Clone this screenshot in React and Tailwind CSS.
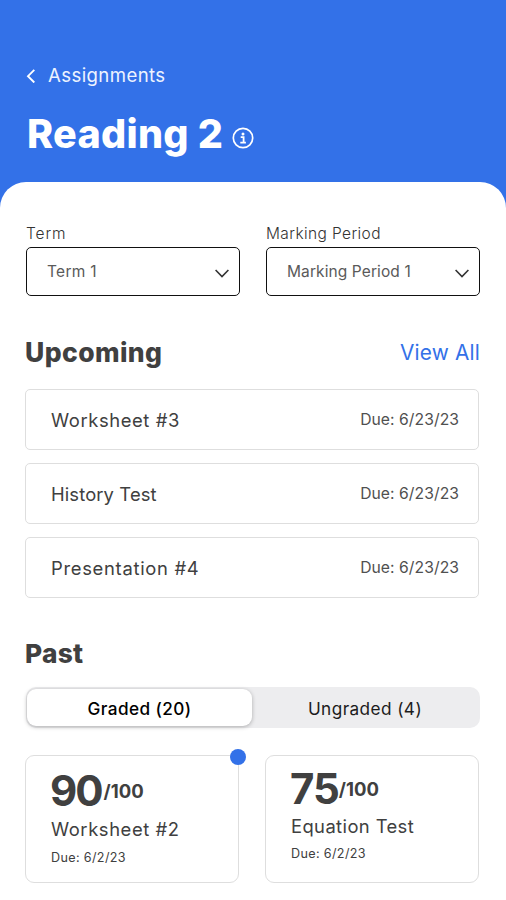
const upcoming = [
  { name: 'Worksheet #3', due: '6/23/23', tracking: 'tracking-[0.6px]' },
  { name: 'History Test', due: '6/23/23', tracking: 'tracking-[0.12px]' },
  { name: 'Presentation #4', due: '6/23/23', tracking: 'tracking-[0.7px]' },
];

function BackIcon() {
  return (
    <svg className="h-[14px] w-[10px]" viewBox="0 0 10 14" fill="none" stroke="currentColor" strokeWidth="1.9">
      <path d="M8.3 0.8 2 7.2 8.3 13.5" />
    </svg>
  );
}

function InfoIcon() {
  return (
    <svg className="h-[22px] w-[22px]" viewBox="0 0 22 22" fill="none" stroke="currentColor">
      <circle cx="11" cy="11" r="9.7" strokeWidth="1.7" />
      <circle cx="11" cy="6.9" r="1.5" fill="currentColor" stroke="none" />
      <path d="M8.7 10.1h2.9v5.4M8.3 15.6h5.6" strokeWidth="1.8" />
    </svg>
  );
}

function SelectField({ label, value, labelTracking, valueTracking }) {
  return (
    <div>
      <div className={`h-[22px] pt-px text-[15.5px] leading-[22px] font-light text-[#333] ${labelTracking}`}>
        {label}
      </div>
      <button className="mt-[3px] flex h-[49px] w-full items-center justify-between rounded-[5px] border border-[#111] pr-[10px] pl-5">
        <span className={`text-[15.5px] leading-6 text-[#5a5a5a] ${valueTracking}`}>{value}</span>
        <svg className="mt-[3px] h-[9px] w-[14px]" viewBox="0 0 14 9" fill="none" stroke="#333" strokeWidth="1.6">
          <path d="M0.6 1 7 7.6 13.4 1" />
        </svg>
      </button>
    </div>
  );
}

function UpcomingRow({ name, due, tracking }) {
  return (
    <div className="flex h-[61px] items-center justify-between rounded-[5px] border border-[#dedede] pr-[19px] pl-[25px]">
      <span className={`text-[18.4px] leading-6 text-[#404040] ${tracking}`}>{name}</span>
      <span className="text-[15.7px] leading-6 tracking-[0.05px] text-[#505050]">Due: {due}</span>
    </div>
  );
}

export default function App() {
  return (
    <div className="h-[900px] w-full overflow-hidden bg-[#3371e8] font-['Inter','Noto_Sans',sans-serif]">
      <header className="h-[182px] px-[26px] pt-[63px] text-white">
        <div className="flex h-6 items-center">
          <span className="pt-[2px]">
            <BackIcon />
          </span>
          <span className="ml-3 text-[18.6px] leading-6 tracking-[0.4px] text-[#edf3ff]">Assignments</span>
        </div>
        <div className="mt-[23px] flex h-12 items-center">
          <h1 className="ml-px text-[39.5px] leading-[48px] font-extrabold tracking-[0.3px]">Reading 2</h1>
          <span className="mt-[7px] ml-[9px]">
            <InfoIcon />
          </span>
        </div>
      </header>

      <main className="h-[718px] rounded-t-[26px] bg-white pt-10 pr-[26px] pl-[25px]">
        <div className="ml-px grid grid-cols-2 gap-[26px]">
          <SelectField label="Term" value="Term 1" labelTracking="tracking-[0.9px]" valueTracking="tracking-[0.3px]" />
          <SelectField
            label="Marking Period"
            value="Marking Period 1"
            labelTracking="tracking-[0.4px]"
            valueTracking="tracking-[0.1px]"
          />
        </div>

        {/* Upcoming */}
        <div className="mt-10 flex items-center justify-between">
          <h2 className="text-[26.5px] leading-8 font-extrabold tracking-[0.4px] text-[#404040]">Upcoming</h2>
          <a className="mt-[2px] text-[20.8px] leading-[30px] tracking-[0.2px] text-[#3371e8]">View All</a>
        </div>
        <div className="mt-[21px] mr-px flex flex-col gap-[13px]">
          {upcoming.map((item) => (
            <UpcomingRow key={item.name} {...item} />
          ))}
        </div>

        {/* Past */}
        <h2 className="mt-10 text-[26.3px] leading-8 font-extrabold tracking-[0.3px] text-[#404040]">Past</h2>
        <div className="mt-[17px] ml-px flex h-[41px] rounded-[10px] bg-[#ededef] p-[2px] pl-px text-[17.2px]">
          <button className="h-[37px] w-[225px] rounded-[9px] bg-white pt-[2px] font-medium tracking-[0.4px] text-black shadow-[0_1px_4px_rgba(0,0,0,0.28)]">
            Graded (20)
          </button>
          <button className="flex-1 pt-[2px] tracking-[0.42px] text-[#1c1c1c]">Ungraded (4)</button>
        </div>

        <div className="mt-[27px] mr-px flex gap-[26px]">
          <div className="relative h-32 flex-1 rounded-[9px] border border-[#dedede] pt-[14px] pl-[25px] text-[#404040]">
            <span className="absolute -top-[7px] -right-[8px] h-4 w-4 rounded-full bg-[#3371e8]" />
            <div className="flex h-[42px] items-center font-bold">
              <span className="-ml-px text-[42px] leading-[42px] tracking-[-2px]">90</span>
              <span className="ml-[2px] text-[18.5px] leading-6">/100</span>
            </div>
            <div className="mt-[5px] text-[18.4px] leading-6 tracking-[0.58px]">Worksheet #2</div>
            <div className="mt-[7px] text-[12.6px] leading-5 tracking-[0.35px]">Due: 6/2/23</div>
          </div>
          <div className="h-32 flex-1 rounded-[9px] border border-[#dedede] pt-3 pl-[25px] text-[#404040]">
            <div className="flex h-[42px] items-center font-bold">
              <span className="-ml-px text-[42px] leading-[42px] tracking-[-1px]">75</span>
              <span className="text-[18.5px] leading-6">/100</span>
            </div>
            <div className="mt-1 text-[18.4px] leading-6 tracking-[0.4px]">Equation Test</div>
            <div className="mt-[6px] text-[12.6px] leading-5 tracking-[0.35px]">Due: 6/2/23</div>
          </div>
        </div>
      </main>
    </div>
  );
}
